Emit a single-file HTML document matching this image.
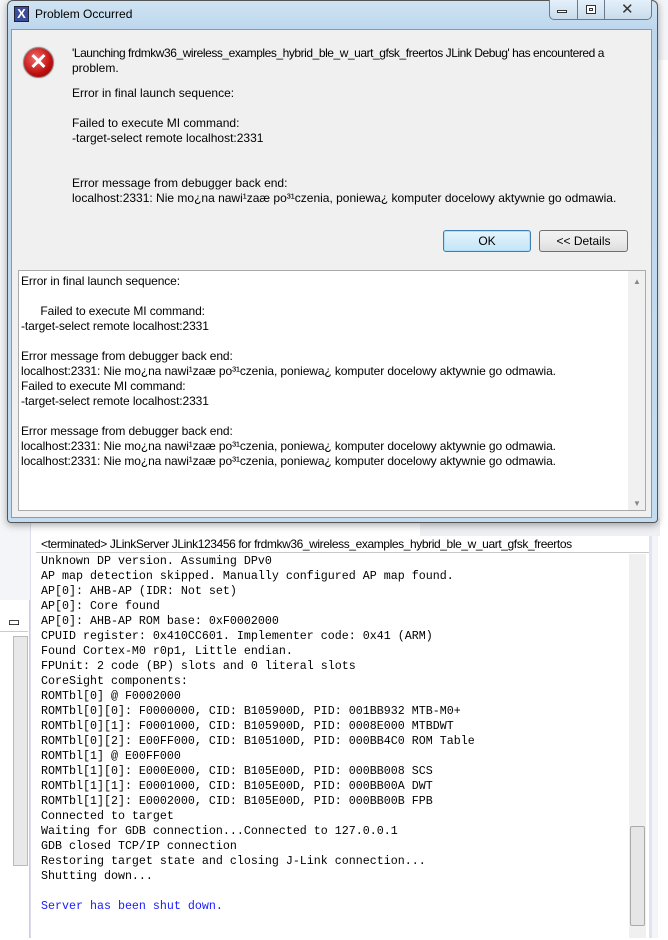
<!DOCTYPE html>
<html><head><meta charset="utf-8"><style>
*{margin:0;padding:0;box-sizing:border-box}
body{width:668px;height:938px;position:relative;overflow:hidden;background:#fff;font-family:"Liberation Sans",sans-serif;font-size:12px;color:#000}
.abs{position:absolute}
.t{position:absolute;white-space:pre;line-height:15px}
.mono{font-family:"Liberation Mono",monospace;font-size:11.66px;white-space:pre;line-height:15px}
</style></head><body>
<div class="abs" style="left:0;top:0;width:668px;height:938px;background:#f3f5f8"></div>
<div class="abs" style="left:658px;top:60px;width:10px;height:880px;background:#fff"></div>
<div class="abs" style="left:0;top:600px;width:30px;height:338px;background:#fff;border-right:1px solid #ccd"></div>
<div class="abs" style="left:0;top:612px;width:28px;height:20px;border-bottom:1px solid #ccc;font-size:13px;text-align:center;line-height:20px">▭</div>
<div class="abs" style="left:13px;top:636px;width:15px;height:230px;background:#e8e8e8;border:1px solid #bbb"></div>
<div class="abs" style="left:30px;top:522px;width:622px;height:416px;background:#fff;border-left:1px solid #dde;border-right:3px solid #dfe4f0"></div>
<div class="abs" style="left:420px;top:518px;width:240px;height:18px;background:#eef0f4"></div>
<div class="t" style="left:41px;top:537px;font-size:12px;letter-spacing:-0.4px">&lt;terminated&gt; JLinkServer JLink123456 for frdmkw36_wireless_examples_hybrid_ble_w_uart_gfsk_freertos</div>
<div class="abs" style="left:36px;top:552px;width:613px;height:1px;background:#c8c8c8"></div>
<div class="abs" style="left:629px;top:554px;width:17px;height:384px;background:#f0f0f0"></div>
<div class="abs" style="left:630px;top:826px;width:15px;height:100px;background:#e6e6e6;border:1px solid #aaa;border-radius:2px"></div>
<div class="mono abs" style="left:41px;top:554px">Unknown DP version. Assuming DPv0
AP map detection skipped. Manually configured AP map found.
AP[0]: AHB-AP (IDR: Not set)
AP[0]: Core found
AP[0]: AHB-AP ROM base: 0xF0002000
CPUID register: 0x410CC601. Implementer code: 0x41 (ARM)
Found Cortex-M0 r0p1, Little endian.
FPUnit: 2 code (BP) slots and 0 literal slots
CoreSight components:
ROMTbl[0] @ F0002000
ROMTbl[0][0]: F0000000, CID: B105900D, PID: 001BB932 MTB-M0+
ROMTbl[0][1]: F0001000, CID: B105900D, PID: 0008E000 MTBDWT
ROMTbl[0][2]: E00FF000, CID: B105100D, PID: 000BB4C0 ROM Table
ROMTbl[1] @ E00FF000
ROMTbl[1][0]: E000E000, CID: B105E00D, PID: 000BB008 SCS
ROMTbl[1][1]: E0001000, CID: B105E00D, PID: 000BB00A DWT
ROMTbl[1][2]: E0002000, CID: B105E00D, PID: 000BB00B FPB
Connected to target
Waiting for GDB connection...Connected to 127.0.0.1
GDB closed TCP/IP connection
Restoring target state and closing J-Link connection...
Shutting down...

<span style="color:#1a1aff">Server has been shut down.</span></div>

<div class="abs" style="left:7px;top:0;width:651px;height:523px;background:linear-gradient(#cfe4f3,#bcd6ec 30px,#c4dcef);border:1px solid #555;border-radius:6px 6px 4px 4px;box-shadow:0 2px 8px rgba(0,0,0,.35)"></div>
<div class="abs" style="left:14px;top:6px;width:15px;height:16px;background:#3b4d9a;border:1px solid #223;color:#fff;font-size:13px;font-weight:bold;line-height:14px;text-align:center">X</div>
<div class="t" style="left:35px;top:7px;font-size:12px">Problem Occurred</div>
<div class="abs" style="left:549px;top:0;width:103px;height:20px;border:1px solid #6a7a8a;border-top:none;border-radius:0 0 5px 5px;background:linear-gradient(#e4f0fa,#c9dcec)"></div>
<div class="abs" style="left:577px;top:0;width:1px;height:20px;background:#6a7a8a"></div>
<div class="abs" style="left:604px;top:0;width:1px;height:20px;background:#6a7a8a"></div>
<div class="abs" style="left:557px;top:10px;width:10px;height:3px;border:1px solid #333;background:#fff"></div>
<div class="abs" style="left:586px;top:5px;width:10px;height:9px;border:1px solid #333;background:#fff;box-shadow:inset 0 0 0 2px #fff,inset 0 0 0 3px #333"></div>
<div class="t" style="left:621px;top:2px;font-size:15px;color:#333">✕</div>
<div class="abs" style="left:11px;top:29px;width:641px;height:489px;background:#f0f0f0;border:1px solid #8a9aaa"></div>
<div class="abs" style="left:23px;top:47px;width:31px;height:31px;border-radius:50%;background:radial-gradient(circle at 40% 35%,#f06a6a,#c01010 60%,#8a0000);border:1px solid #888;box-shadow:0 0 0 1px #ddd"></div>
<div class="abs" style="left:23px;top:45px;width:31px;height:31px;color:#fff;font-size:22px;font-weight:bold;text-align:center;line-height:34px">✕</div>
<div class="t" style="left:72px;top:46px;letter-spacing:-0.45px">'Launching frdmkw36_wireless_examples_hybrid_ble_w_uart_gfsk_freertos JLink Debug' has encountered a</div>
<div class="t" style="left:72px;top:61px">problem.</div>
<div class="t" style="left:72px;top:86px">Error in final launch sequence:</div>
<div class="t" style="left:72px;top:116px">Failed to execute MI command:</div>
<div class="t" style="left:72px;top:131px">-target-select remote localhost:2331</div>
<div class="t" style="left:72px;top:176px">Error message from debugger back end:</div>
<div class="t" style="left:72px;top:191px">localhost:2331: Nie mo¿na nawi¹zaæ po³¹czenia, poniewa¿ komputer docelowy aktywnie go odmawia.</div>
<div class="abs" style="left:443px;top:230px;width:88px;height:22px;border:1px solid #3c7fb1;border-radius:3px;background:linear-gradient(#e5f4fc,#c4e5f6);box-shadow:inset 0 0 0 1px #aee0fa;text-align:center;line-height:20px">OK</div>
<div class="abs" style="left:539px;top:230px;width:89px;height:22px;border:1px solid #707070;border-radius:3px;background:linear-gradient(#f2f2f2,#ebebeb 50%,#dddddd);text-align:center;line-height:20px">&lt;&lt; Details</div>
<div class="abs" style="left:18px;top:270px;width:628px;height:241px;background:#fff;border:1px solid #aaa"></div>
<div class="abs" style="left:628px;top:271px;width:17px;height:239px;background:#f0f0f0"></div>
<div class="t" style="left:633px;top:274px;font-size:8px;color:#888">▲</div>
<div class="t" style="left:633px;top:496px;font-size:8px;color:#888">▼</div>
<div class="t" style="left:21px;top:274px;letter-spacing:-0.1px">Error in final launch sequence:

      Failed to execute MI command:
-target-select remote localhost:2331

Error message from debugger back end:
localhost:2331: Nie mo¿na nawi¹zaæ po³¹czenia, poniewa¿ komputer docelowy aktywnie go odmawia.
Failed to execute MI command:
-target-select remote localhost:2331

Error message from debugger back end:
localhost:2331: Nie mo¿na nawi¹zaæ po³¹czenia, poniewa¿ komputer docelowy aktywnie go odmawia.
localhost:2331: Nie mo¿na nawi¹zaæ po³¹czenia, poniewa¿ komputer docelowy aktywnie go odmawia.</div>
</body></html>
